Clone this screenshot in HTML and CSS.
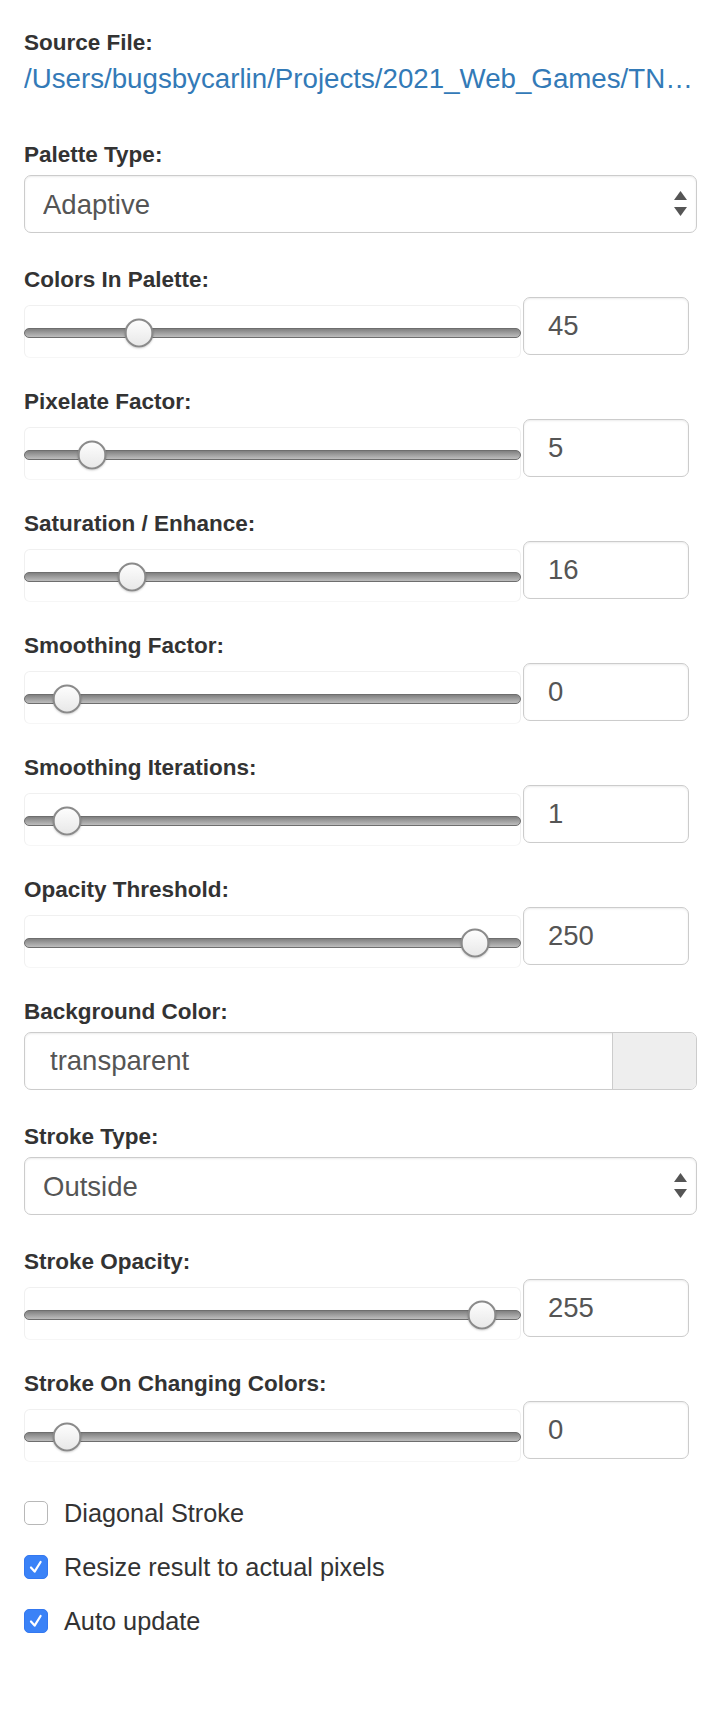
FILE: index.html
```html
<!DOCTYPE html>
<html lang="en">
<head>
<meta charset="utf-8">
<title>Settings</title>
<link rel="stylesheet" href="styles.css">
</head>
<body>
<div class="panel">
  <div class="group group-file">
    <label class="label">Source File:</label>
    <a class="file-link" href="#">/Users/bugsbycarlin/Projects/2021_Web_Games/TN…</a>
  </div>

  <div class="group">
    <label class="label">Palette Type:</label>
    <div class="select-wrap">
      <select class="select"><option>Adaptive</option></select>
      <svg class="select-arrows" viewBox="0 0 13 26"><polygon points="0,9 6.5,0 13,9" fill="#555"/><polygon points="0,16 13,16 6.5,25" fill="#555"/></svg>
    </div>
  </div>

  <div class="group slider-group">
    <label class="label">Colors In Palette:</label>
    <div class="row">
      <div class="slider"><div class="track"><span class="thumb" style="left:113.7px"></span></div></div>
      <input class="number" type="text" value="45">
    </div>
  </div>

  <div class="group slider-group">
    <label class="label">Pixelate Factor:</label>
    <div class="row">
      <div class="slider"><div class="track"><span class="thumb" style="left:66.7px"></span></div></div>
      <input class="number" type="text" value="5">
    </div>
  </div>

  <div class="group slider-group">
    <label class="label">Saturation / Enhance:</label>
    <div class="row">
      <div class="slider"><div class="track"><span class="thumb" style="left:107px"></span></div></div>
      <input class="number" type="text" value="16">
    </div>
  </div>

  <div class="group slider-group">
    <label class="label">Smoothing Factor:</label>
    <div class="row">
      <div class="slider"><div class="track"><span class="thumb" style="left:41.6px"></span></div></div>
      <input class="number" type="text" value="0">
    </div>
  </div>

  <div class="group slider-group">
    <label class="label">Smoothing Iterations:</label>
    <div class="row">
      <div class="slider"><div class="track"><span class="thumb" style="left:41.6px"></span></div></div>
      <input class="number" type="text" value="1">
    </div>
  </div>

  <div class="group slider-group">
    <label class="label">Opacity Threshold:</label>
    <div class="row">
      <div class="slider"><div class="track"><span class="thumb" style="left:450px"></span></div></div>
      <input class="number" type="text" value="250">
    </div>
  </div>

  <div class="group">
    <label class="label">Background Color:</label>
    <div class="input-group">
      <input class="color-input" type="text" value="transparent">
      <span class="addon"></span>
    </div>
  </div>

  <div class="group">
    <label class="label">Stroke Type:</label>
    <div class="select-wrap">
      <select class="select"><option>Outside</option></select>
      <svg class="select-arrows" viewBox="0 0 13 26"><polygon points="0,9 6.5,0 13,9" fill="#555"/><polygon points="0,16 13,16 6.5,25" fill="#555"/></svg>
    </div>
  </div>

  <div class="group slider-group">
    <label class="label">Stroke Opacity:</label>
    <div class="row">
      <div class="slider"><div class="track"><span class="thumb" style="left:457px"></span></div></div>
      <input class="number" type="text" value="255">
    </div>
  </div>

  <div class="group slider-group">
    <label class="label">Stroke On Changing Colors:</label>
    <div class="row">
      <div class="slider"><div class="track"><span class="thumb" style="left:41.6px"></span></div></div>
      <input class="number" type="text" value="0">
    </div>
  </div>

  <div class="checks">
    <label class="check"><span class="box"></span>Diagonal Stroke</label>
    <label class="check"><span class="box checked"><svg viewBox="0 0 24 24"><path d="M6.5 12.5 L10.5 17 L17 6.5" fill="none" stroke="#fff" stroke-width="2.4" stroke-linecap="round" stroke-linejoin="round"/></svg></span>Resize result to actual pixels</label>
    <label class="check"><span class="box checked"><svg viewBox="0 0 24 24"><path d="M6.5 12.5 L10.5 17 L17 6.5" fill="none" stroke="#fff" stroke-width="2.4" stroke-linecap="round" stroke-linejoin="round"/></svg></span>Auto update</label>
  </div>
</div>
</body>
</html>
```
FILE: styles.css
```css
html, body {
  margin: 0;
  padding: 0;
  background: #fff;
}

body {
  font-family: "Liberation Sans", Arial, sans-serif;
  color: #333;
}

.panel {
  padding: 28px 23px 60px 24px;
}

.group {
  margin-bottom: 32px;
}

.label {
  display: block;
  font-weight: bold;
  font-size: 22.5px;
  line-height: 30px;
  color: #333;
}

.group-file {
  margin-bottom: 43px;
}

.file-link {
  display: block;
  margin-top: 3px;
  font-size: 27.7px;
  line-height: 36px;
  color: #337ab7;
  text-decoration: none;
  white-space: nowrap;
  overflow: hidden;
  text-overflow: ellipsis;
}

.select-wrap {
  position: relative;
  margin-top: 5px;
}

.select {
  display: block;
  width: 100%;
  height: 58px;
  -webkit-appearance: none;
  appearance: none;
  box-sizing: border-box;
  border: 1px solid #ccc;
  border-radius: 7px;
  background: #fff;
  padding: 0 40px 0 18px;
  font-family: "Liberation Sans", Arial, sans-serif;
  font-size: 27.5px;
  color: #555;
  box-shadow: inset 0 1px 2px rgba(0, 0, 0, 0.075);
  outline: none;
}

.select-arrows {
  position: absolute;
  right: 10px;
  top: 16px;
  width: 13px;
  height: 26px;
}

.slider-group {
  margin-bottom: 29px;
}

.row {
  display: flex;
  align-items: flex-start;
  gap: 2px;
  margin-top: 2px;
}

.slider {
  flex: 0 0 497px;
  height: 53px;
  margin-top: 8px;
  box-sizing: border-box;
  border: 1px solid #f0f0f0;
  border-bottom-color: #f6f6f6;
  border-radius: 6px;
  display: flex;
  align-items: center;
  padding-top: 3px;
}

.track {
  position: relative;
  flex: 1;
  height: 10px;
  margin: 0 -1px;
  box-sizing: border-box;
  border: 1px solid #6e6e6e;
  border-radius: 5px;
  background: linear-gradient(#808080 0%, #999 40%, #bdbdbd 100%);
}

.thumb {
  position: absolute;
  top: 50%;
  width: 29px;
  height: 29px;
  box-sizing: border-box;
  border: 2px solid #8a8a8a;
  border-radius: 50%;
  background: linear-gradient(#fdfdfd, #e8e8e8);
  transform: translate(-50%, -50%);
  box-shadow: 0 1px 2px rgba(0, 0, 0, 0.18);
}

.number {
  flex: 0 0 166px;
  width: 166px;
  height: 58px;
  margin: 0;
  box-sizing: border-box;
  border: 1px solid #ccc;
  border-radius: 7px;
  padding: 0 10px 0 24px;
  font-family: "Liberation Sans", Arial, sans-serif;
  font-size: 27.5px;
  color: #555;
  background: #fff;
  box-shadow: inset 0 1px 2px rgba(0, 0, 0, 0.075);
  outline: none;
}

.input-group {
  display: flex;
  margin-top: 5px;
  height: 58px;
  box-sizing: border-box;
  border: 1px solid #ccc;
  border-radius: 7px;
  overflow: hidden;
  box-shadow: inset 0 1px 2px rgba(0, 0, 0, 0.075);
}

.color-input {
  flex: 1;
  min-width: 0;
  border: 0;
  margin: 0;
  padding: 0 0 0 25px;
  font-family: "Liberation Sans", Arial, sans-serif;
  font-size: 27.5px;
  color: #555;
  background: transparent;
  outline: none;
}

.addon {
  flex: 0 0 83px;
  background: #eee;
  border-left: 1px solid #ccc;
}

.checks {
  display: flex;
  flex-direction: column;
  gap: 20px;
  margin-top: 34px;
}

.check {
  display: flex;
  align-items: center;
  gap: 16px;
  height: 34px;
  font-size: 25.3px;
  color: #333;
}

.box {
  display: flex;
  flex: 0 0 24px;
  width: 24px;
  height: 24px;
  box-sizing: border-box;
  border: 1px solid #b8b8b8;
  border-radius: 5px;
  background: #fff;
}

.box.checked {
  background: #3a82f7;
  border-color: #3478f0;
}

.box svg {
  width: 100%;
  height: 100%;
}
```
